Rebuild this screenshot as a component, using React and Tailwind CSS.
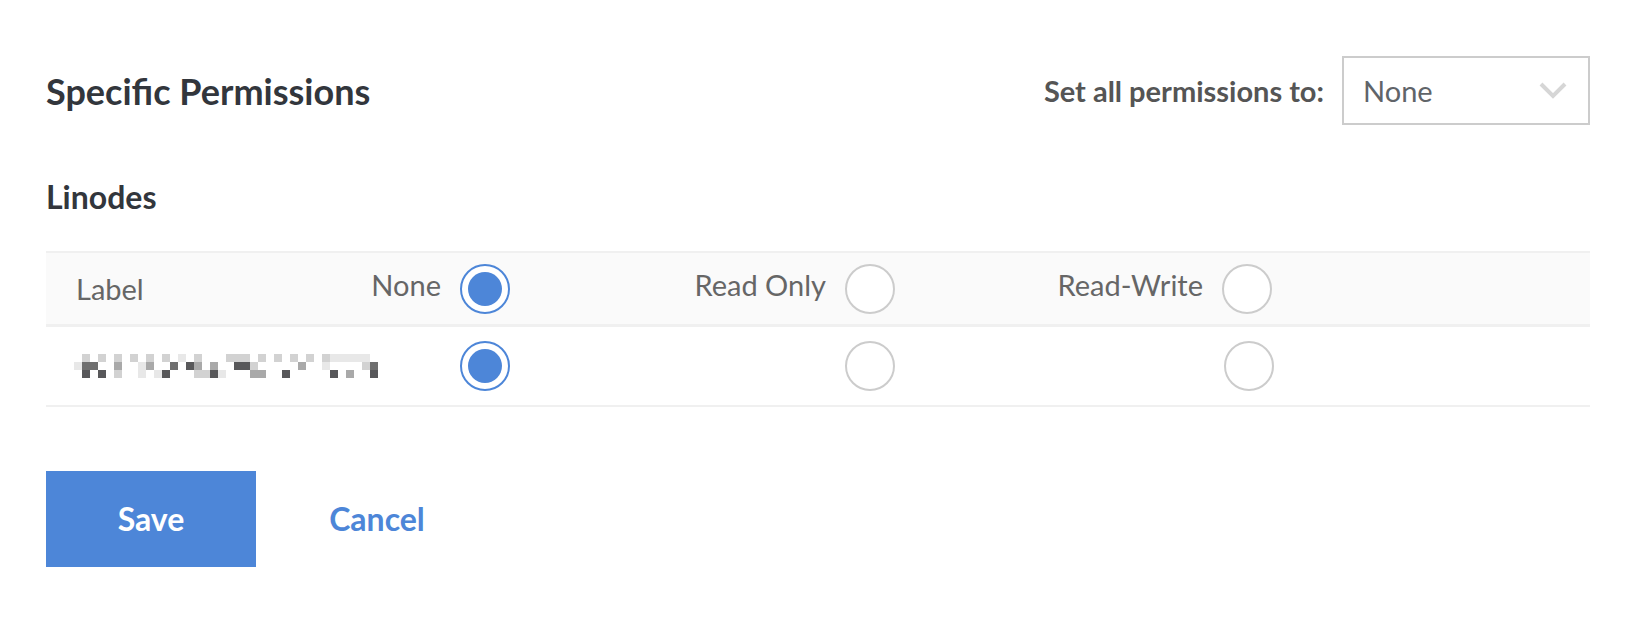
import React from 'react';

const shades = ['', '#e8e8e8', '#d2d2d2', '#a9a9a9', '#6f6f6f', '#58585a'];

// pixelated (redacted) linode label
const mosaic = [
  [0,2,0,2,0,2,0,2,0,2,0,2,0,1,0,2,0,0,0,2,2,2,0,2,0,2,0,2,0,2,0,2,1,1,1,1,1,0],
  [1,4,4,0,0,3,0,0,1,3,0,0,4,0,5,3,0,3,0,0,5,5,2,0,0,0,0,0,3,0,0,1,0,0,0,0,2,4],
  [0,5,0,5,0,2,0,0,1,0,1,5,0,0,0,2,2,5,1,0,0,0,3,3,0,0,5,0,0,0,0,0,5,0,3,0,0,5],
];

const Mosaic = () => (
  <svg width="304" height="24" viewBox="0 0 304 24">
    {mosaic.map((row, y) =>
      row.map((v, x) =>
        v ? <rect key={`${x}-${y}`} x={x * 8} y={y * 8} width="8" height="8" fill={shades[v]} /> : null
      )
    )}
  </svg>
);

const Radio = ({ checked }) => (
  <span
    className={
      checked
        ? 'flex w-[50px] h-[50px] shrink-0 items-center justify-center rounded-full border-2 border-[#4d86d8] bg-white'
        : 'flex w-[50px] h-[50px] shrink-0 items-center justify-center rounded-full border-2 border-[#cccccc] bg-white'
    }
  >
    {checked && <span className="block w-[34px] h-[34px] rounded-full bg-[#4d86d8]" />}
  </span>
);

const HeadCell = ({ label, checked, width }) => (
  <div className={`flex items-center justify-end gap-[19px] pr-[20px] ${width}`}>
    <span className="mb-[8px] text-[29px] leading-none text-[#666666]">{label}</span>
    <Radio checked={checked} />
  </div>
);

const App = () => {
  return (
    <div className="min-h-screen bg-white pl-[46px] pr-[48px] pt-[56px]" style={{ fontFamily: 'Lato, "Open Sans", sans-serif' }}>
      <div className="flex items-center justify-between">
        <h2 className="text-[36px] font-bold leading-none text-[#32363c]">Specific Permissions</h2>
        <div className="flex items-center gap-[18px]">
          <span className="text-[29px] font-bold leading-none text-[#555555]">Set all permissions to:</span>
          <div className="flex h-[69px] w-[248px] items-center justify-between border-2 border-[#cccccc] pl-[19px] pr-[21px]">
            <span className="text-[29px] leading-none text-[#606469]">None</span>
            <svg width="28" height="17" viewBox="0 0 28 17">
              <polyline points="2,2 14,14 26,2" fill="none" stroke="#d6d6d6" strokeWidth="4" />
            </svg>
          </div>
        </div>
      </div>

      <h3 className="mt-[56px] text-[32px] font-bold leading-none text-[#32363c]">Linodes</h3>

      <div className="mt-[38px]">
        <div className="flex h-[76px] items-center border-t-2 border-b-[3px] border-[#f0f0f0] bg-[#fafafa]">
          <div className="w-[310px] pl-[30px] text-[29px] leading-none text-[#666666]">Label</div>
          <HeadCell label="None" checked width="w-[174px]" />
          <HeadCell label="Read Only" width="w-[385px]" />
          <HeadCell label="Read-Write" width="w-[377px]" />
          <div className="flex-1" />
        </div>
        <div className="flex h-[80px] items-center border-b-2 border-[#f0f0f0]">
          <div className="w-[310px] pl-[28px]">
            <Mosaic />
          </div>
          <div className="flex w-[174px] justify-end pr-[20px]">
            <Radio checked />
          </div>
          <div className="flex w-[385px] justify-end pr-[20px]">
            <Radio />
          </div>
          <div className="flex w-[377px] justify-end pr-[18px]">
            <Radio />
          </div>
          <div className="flex-1" />
        </div>
      </div>

      <div className="mt-[64px] flex items-center gap-[16px]">
        <button className="h-[96px] w-[210px] bg-[#4d86d8] text-[32px] font-bold leading-none text-white">Save</button>
        <button className="h-[96px] w-[210px] text-[32px] font-bold leading-none text-[#4d86d8]">Cancel</button>
      </div>
    </div>
  );
};

export default App;
